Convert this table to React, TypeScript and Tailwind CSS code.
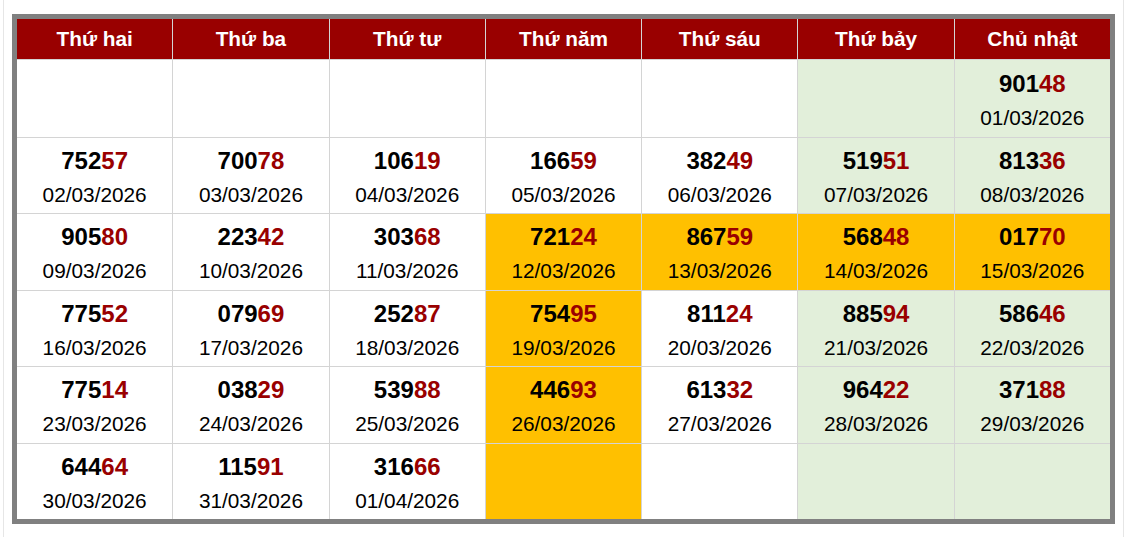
const days = ['Thứ hai', 'Thứ ba', 'Thứ tư', 'Thứ năm', 'Thứ sáu', 'Thứ bảy', 'Chủ nhật'];

type Cell = { num?: string; date?: string; bg: 'white' | 'green' | 'orange' };

const W = 'white' as const;
const G = 'green' as const;
const O = 'orange' as const;

const rows: Cell[][] = [
  [
    { bg: W }, { bg: W }, { bg: W }, { bg: W }, { bg: W }, { bg: G },
    { num: '90148', date: '01/03/2026', bg: G },
  ],
  [
    { num: '75257', date: '02/03/2026', bg: W },
    { num: '70078', date: '03/03/2026', bg: W },
    { num: '10619', date: '04/03/2026', bg: W },
    { num: '16659', date: '05/03/2026', bg: W },
    { num: '38249', date: '06/03/2026', bg: W },
    { num: '51951', date: '07/03/2026', bg: G },
    { num: '81336', date: '08/03/2026', bg: G },
  ],
  [
    { num: '90580', date: '09/03/2026', bg: W },
    { num: '22342', date: '10/03/2026', bg: W },
    { num: '30368', date: '11/03/2026', bg: W },
    { num: '72124', date: '12/03/2026', bg: O },
    { num: '86759', date: '13/03/2026', bg: O },
    { num: '56848', date: '14/03/2026', bg: O },
    { num: '01770', date: '15/03/2026', bg: O },
  ],
  [
    { num: '77552', date: '16/03/2026', bg: W },
    { num: '07969', date: '17/03/2026', bg: W },
    { num: '25287', date: '18/03/2026', bg: W },
    { num: '75495', date: '19/03/2026', bg: O },
    { num: '81124', date: '20/03/2026', bg: W },
    { num: '88594', date: '21/03/2026', bg: G },
    { num: '58646', date: '22/03/2026', bg: G },
  ],
  [
    { num: '77514', date: '23/03/2026', bg: W },
    { num: '03829', date: '24/03/2026', bg: W },
    { num: '53988', date: '25/03/2026', bg: W },
    { num: '44693', date: '26/03/2026', bg: O },
    { num: '61332', date: '27/03/2026', bg: W },
    { num: '96422', date: '28/03/2026', bg: G },
    { num: '37188', date: '29/03/2026', bg: G },
  ],
  [
    { num: '64464', date: '30/03/2026', bg: W },
    { num: '11591', date: '31/03/2026', bg: W },
    { num: '31666', date: '01/04/2026', bg: W },
    { bg: O }, { bg: W }, { bg: G }, { bg: G },
  ],
];

// row heights alternate slightly in the reference
const rowH = ['h-[77px]', 'h-[75px]', 'h-[76px]', 'h-[75px]', 'h-[76px]', 'h-[75px]'];

const bgClass = {
  white: 'bg-white',
  green: 'bg-[#e2efda]',
  orange: 'bg-[#ffc000]',
};

export default function App() {
  return (
    <div className="min-h-[537px] bg-white font-['Liberation_Sans',Arial,sans-serif]">
      <div className="ml-[3px] mr-[4px] border-x border-[#e6e6e6] pt-[14px] pl-[8px] pr-[8px] h-[537px]">
        <div className="grid grid-cols-7 gap-px bg-[#d4d4d4] border-[5px] border-[#808080]">
          {days.map((d) => (
            <div
              key={d}
              className="h-[40px] pb-px bg-[#990000] text-white font-bold text-[20.8px] flex items-center justify-center"
            >
              {d}
            </div>
          ))}
          {rows.map((row, ri) =>
            row.map((c, ci) => (
              <div
                key={`${ri}-${ci}`}
                className={`${rowH[ri]} flex flex-col items-center justify-center pt-[3px] ${bgClass[c.bg]}`}
              >
                {c.num && (
                  <>
                    <div className="text-[24px] font-bold leading-[34px] text-black">
                      {c.num.slice(0, 3)}
                      <span className="text-[#990000]">{c.num.slice(3)}</span>
                    </div>
                    <div className="text-[20.8px] leading-[33px] text-black">{c.date}</div>
                  </>
                )}
              </div>
            ))
          )}
        </div>
      </div>
    </div>
  );
}
